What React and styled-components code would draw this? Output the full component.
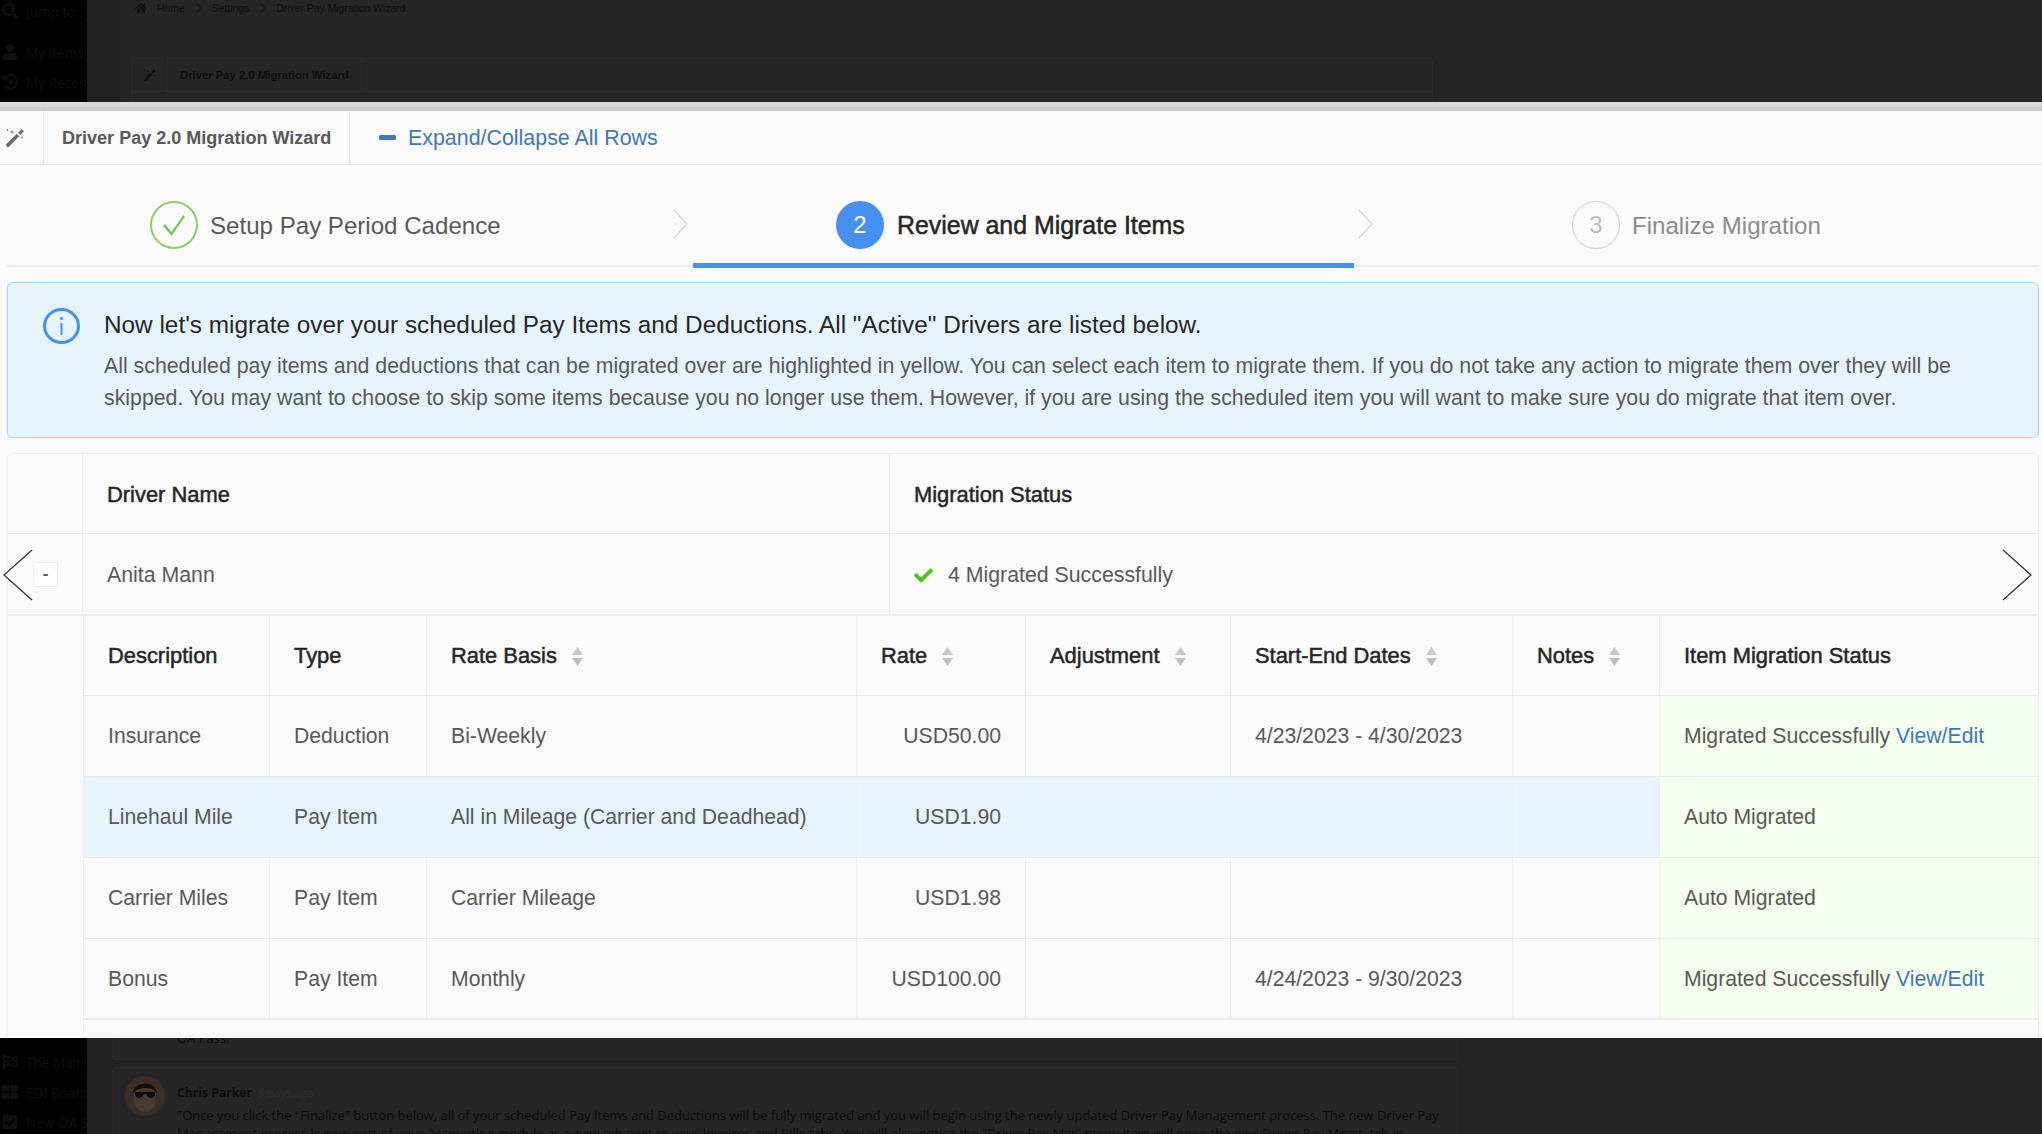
import React from 'react';
import styled, { createGlobalStyle } from 'styled-components';
import { FaCheck, FaHome, FaUser, FaHistory, FaFlagCheckered, FaThLarge, FaSearch, FaCheckSquare } from 'react-icons/fa';

const GlobalStyle = createGlobalStyle`
  * { box-sizing: border-box; }
  html, body { margin: 0; padding: 0; background: #252525; }
  body { font-family: "Liberation Sans", Arial, sans-serif; }
`;

const Page = styled.div`
  position: relative;
  width: 2042px;
  height: 1134px;
  overflow: hidden;
  display: flex;
  flex-direction: column;
`;

/* dimmed app behind the lightbox */
const DarkBand = styled.div`
  height: ${p => p.$height}px;
  flex: none;
  display: flex;
  overflow: hidden;
  background: #252525;
`;

const DarkSidebar = styled.div`
  width: 87px;
  flex: none;
  overflow: hidden;
  background: #000;
  padding: ${p => p.$top}px 0 0 2px;
  display: flex;
  flex-direction: column;
  gap: ${p => p.$gap}px;
  font-family: "Open Sans", sans-serif;
`;

const DarkNavItem = styled.div`
  display: flex;
  align-items: center;
  gap: 8px;
  height: 24px;
  flex: none;
  margin-top: ${p => p.$offset || 0}px;
  white-space: nowrap;
  color: #101010;
  font-size: 13.6px;
  svg { flex: none; width: 16px; height: 16px; color: #101010; }
`;

const DarkMain = styled.div`
  flex: 1;
  min-width: 0;
  background: linear-gradient(90deg, #222 33px, #252525 33px);
`;

const DarkCrumbs = styled.div`
  display: flex;
  align-items: center;
  height: 16px;
  padding-left: 48px;
  gap: 10px;
  color: #111;
  font-size: 10.4px;
  svg { color: #111; flex: none; }
`;

const DarkPanel = styled.div`
  width: ${p => p.$width || 1346}px;
  height: ${p => p.$height}px;
  margin: ${p => p.$margin};
  padding-left: ${p => p.$inset || 0}px;
  background: #262626;
  border: 1px solid #2b2b2b;
  border-radius: 3px;
`;

const DarkPanelHead = styled.div`
  display: flex;
  align-items: center;
  height: 33px;
  border-bottom: 1px solid #2b2b2b;
  color: #0f0f0f;
  font-size: 11.3px;
  font-weight: 700;
`;

const DarkPanelIcon = styled.div`
  width: 36px;
  height: 100%;
  display: flex;
  align-items: center;
  justify-content: center;
  border-right: 1px solid #2b2b2b;
  color: #111;
`;

const DarkPanelTitle = styled.div`
  height: 100%;
  display: flex;
  align-items: center;
  padding: 0 12px;
  border-right: 1px solid #2b2b2b;
`;

const DarkComment = styled.div`
  display: flex;
  gap: 12px;
  padding: 8px 12px;
  font-family: "Open Sans", sans-serif;
`;

const DarkAuthor = styled.div`
  font-size: 12.2px;
  line-height: 16px;
  color: #0d0d0d;
  font-weight: 700;
  margin-top: 9px;
  small { font-size: 11.5px; font-weight: 400; color: #2f2f2f; margin-left: 2px; }
`;

const DarkText = styled.div`
  font-size: 12.95px;
  line-height: 18px;
  color: #0d0d0d;
  white-space: nowrap;
  font-family: "Open Sans", sans-serif;
  margin-top: ${p => p.$top || 0}px;
`;

/* the lightbox screenshot itself */
const Shot = styled.div`
  position: relative;
  flex: 1;
  min-height: 0;
  overflow: hidden;
  background: #fafafa;
  color: #595959;
  font-size: 21.3px;
`;

const TopEdge = styled.div`
  height: 9px;
  background: linear-gradient(#dcdcdc, #c8c8c8);
`;

const Toolbar = styled.div`
  display: flex;
  align-items: stretch;
  height: 54px;
  border-bottom: 1px solid #e8e8e8;
`;

const ToolIcon = styled.div`
  width: 44px;
  display: flex;
  align-items: center;
  padding-left: 5px;
  border-right: 1px solid #e8e8e8;
`;

const ToolTitle = styled.div`
  width: 306px;
  display: flex;
  align-items: center;
  padding: 2px 0 0 18px;
  border-right: 1px solid #e8e8e8;
  color: #595959;
  font-size: 18.05px;
  font-weight: 700;
  white-space: nowrap;
`;

const ExpandLink = styled.a`
  display: flex;
  align-items: center;
  margin-left: 29px;
  padding-top: 2px;
  gap: 12px;
  color: #4078b8;
  font-size: 21.4px;
  white-space: nowrap;
`;

const MinusBar = styled.span`
  width: 17px;
  height: 5px;
  margin-top: -2px;
  border-radius: 1.5px;
  background: #4078b8;
`;

const Steps = styled.div`
  display: grid;
  grid-template-columns: 686px 661px 685px;
  height: 103px;
  margin: 0 3px 0 7px;
`;

const Step = styled.div`
  display: flex;
  align-items: flex-start;
  gap: 12px;
  padding-top: 36px;
  padding-left: ${p => p.$indent}px;
  height: ${p => (p.$active ? 103 : 102)}px;
  border-bottom: ${p => (p.$active ? '5px solid #4690f5' : '2px solid #ececec')};
`;

const StepCircle = styled.div`
  width: 48px;
  height: 48px;
  flex: none;
  border-radius: 50%;
  display: flex;
  align-items: center;
  justify-content: center;
  font-size: 24px;
  border: ${p => {
    if (p.$state === 'done') return '2px solid #8ccf63';
    if (p.$state === 'todo') return '1.5px solid #cfcfcf';
    return 'none';
  }};
  background: ${p => (p.$state === 'active' ? '#4690f5' : 'transparent')};
  color: ${p => (p.$state === 'active' ? '#fff' : '#bdbdbd')};
`;

const StepLabel = styled.div`
  height: 48px;
  line-height: 49px;
  margin-left: ${p => (p.$state === 'active' ? 1 : 0)}px;
  font-size: ${p => (p.$state === 'active' ? 24.9 : 24.1)}px;
  white-space: nowrap;
  color: ${p => (p.$state === 'active' ? '#262626' : p.$state === 'todo' ? '#8c8c8c' : '#595959')};
  -webkit-text-stroke: ${p => (p.$state === 'active' ? '0.5px #262626' : '0')};
`;

const StepChevron = styled.svg`
  flex: none;
  width: 16px;
  height: 30px;
  margin-left: auto;
  margin-top: 8px;
  margin-right: ${p => p.$right}px;
`;

const Info = styled.div`
  display: flex;
  gap: 24px;
  margin: 14px 3px 0 7px;
  height: 156px;
  padding: 25px 20px 0 35px;
  background: #e6f4fe;
  border: 1px solid #a6d7fb;
  border-radius: 6px;
`;

const InfoIcon = styled.svg`
  width: 37px;
  height: 36px;
  flex: none;
`;

const InfoTitle = styled.div`
  color: #262626;
  font-size: 24.35px;
  line-height: 34px;
  white-space: nowrap;
`;

const InfoBody = styled.div`
  margin-top: 8px;
  color: #595959;
  font-size: 21.32px;
  line-height: 32px;
  white-space: nowrap;
`;

const Drivers = styled.div`
  margin: 15px 3px 0 7px;
  height: 700px;
  background: #fafafa;
  border: 1px solid #efefef;
  border-radius: 6px 6px 0 0;
`;

const DriverRow = styled.div`
  display: grid;
  grid-template-columns: 75px 807px 1fr;
  height: ${p => p.$height}px;
  border-bottom: ${p => p.$rule || 1}px solid #ebebeb;
`;

const DriverCell = styled.div`
  display: flex;
  align-items: center;
  gap: 15px;
  padding: 2px 0 0 24px;
  border-right: ${p => (p.$last ? 'none' : '1px solid #efefef')};
  color: ${p => (p.$head ? '#262626' : '#595959')};
  font-size: ${p => (p.$head ? 21.9 : 21.3)}px;
  -webkit-text-stroke: ${p => (p.$head ? '0.5px #262626' : '0')};
`;

const ToggleCell = styled(DriverCell)`
  padding: 0 0 0 25px;
`;

const ToggleButton = styled.div`
  width: 25px;
  height: 25px;
  display: flex;
  align-items: center;
  justify-content: center;
  background: #fff;
  border: 1px solid #ededed;
  border-radius: 3px;
  color: #595959;
  font-size: 17px;
  font-weight: 700;
`;

const ExpandedRow = styled.div`
  display: grid;
  grid-template-columns: 76px 1fr;
`;

const Spacer = styled.div`
  border-right: 1px solid #efefef;
  height: 440px;
`;

const ItemRow = styled.div`
  display: grid;
  grid-template-columns: 186px 157px 430px 169px 205px 282px 147px 1fr;
  height: ${p => p.$height || 81}px;
  border-bottom: ${p => (p.$strong ? 2 : 1)}px solid #ececec;
  background: ${p => (p.$selected ? '#e6f4fe' : 'transparent')};
  font-size: 21.2px;
`;

const ItemCell = styled.div`
  display: flex;
  align-items: center;
  justify-content: ${p => (p.$right ? 'flex-end' : 'flex-start')};
  gap: 15px;
  padding: ${p => (p.$head ? '1px' : '0')} 24px 0;
  white-space: nowrap;
  border-right: ${p => (p.$last ? 'none' : '1px solid #efefef')};
  background: ${p => (p.$status ? '#f6ffed' : 'transparent')};
  color: ${p => (p.$head ? '#262626' : '#595959')};
`;

const HeadText = styled.span`
  font-size: 21.9px;
  -webkit-text-stroke: 0.5px #262626;
`;

const EditLink = styled.a`
  color: #4078b8;
  margin-left: 6px;
`;

const Arrow = styled.svg`
  position: absolute;
  top: 445px;
  ${p => (p.$side === 'left' ? 'left: 1px;' : 'right: 8px;')}
  width: 34px;
  height: 56px;
`;

const AvatarArt = styled.svg`
  flex: none;
  width: 40px;
  height: 40px;
`;

const columns = [
  { label: 'Description' },
  { label: 'Type' },
  { label: 'Rate Basis', sort: true },
  { label: 'Rate', sort: true },
  { label: 'Adjustment', sort: true },
  { label: 'Start-End Dates', sort: true },
  { label: 'Notes', sort: true },
  { label: 'Item Migration Status' },
];

const items = [
  { name: 'Insurance', type: 'Deduction', basis: 'Bi-Weekly', rate: 'USD50.00', dates: '4/23/2023 - 4/30/2023', status: 'Migrated Successfully', edit: true },
  { name: 'Linehaul Mile', type: 'Pay Item', basis: 'All in Mileage (Carrier and Deadhead)', rate: 'USD1.90', dates: '', status: 'Auto Migrated', selected: true },
  { name: 'Carrier Miles', type: 'Pay Item', basis: 'Carrier Mileage', rate: 'USD1.98', dates: '', status: 'Auto Migrated' },
  { name: 'Bonus', type: 'Pay Item', basis: 'Monthly', rate: 'USD100.00', dates: '4/24/2023 - 9/30/2023', status: 'Migrated Successfully', edit: true },
];

function SortIcon() {
  return (
    <svg width="11" height="19" viewBox="0 0 11 19">
      <path d="M5.5 0 L11 8 H0 Z" fill="#c9c9c9" />
      <path d="M0 11 H11 L5.5 19 Z" fill="#bfbfbf" />
    </svg>
  );
}

function WandIcon({ size, color, spark }) {
  return (
    <svg width={size} height={size} viewBox="0 0 20 20">
      <line x1="1.8" y1="18.2" x2="13" y2="7" stroke={color} strokeWidth="3.6" />
      <line x1="14.2" y1="5.8" x2="17.8" y2="2.2" stroke={color} strokeWidth="3.2" />
      <path d="M7 2 V6 M5 4 H9 M2.5 1 V3 M1.5 2 H3.5 M17 8.5 V10.5 M16 9.5 H18" stroke={spark} strokeWidth="1" fill="none" />
    </svg>
  );
}

function CrumbSep() {
  return (
    <svg width="7" height="12" viewBox="0 0 7 12">
      <polyline points="1,1 6,6 1,11" fill="none" stroke="#161616" strokeWidth="1" />
    </svg>
  );
}

function Chevron({ right }) {
  return (
    <StepChevron $right={right} viewBox="0 0 16 30">
      <polyline points="1,1 14,15 1,29" fill="none" stroke="#d4d4d4" strokeWidth="1.2" />
    </StepChevron>
  );
}

function NavArrow({ side }) {
  const pts = side === 'left' ? '31,3 3,28 31,53' : '3,3 31,28 3,53';
  return (
    <Arrow $side={side} viewBox="0 0 34 56">
      <polyline points={pts} fill="none" stroke="#fff" strokeWidth="4" />
      <polyline points={pts} fill="none" stroke="#333" strokeWidth="1.3" />
    </Arrow>
  );
}

function Avatar() {
  return (
    <AvatarArt viewBox="0 0 40 40">
      <circle cx="20" cy="20" r="20" fill="#3a2f28" />
      <ellipse cx="20" cy="22" rx="11" ry="14" fill="#4a3b32" />
      <path d="M8 18 C8 4 32 4 32 18 C28 10 12 10 8 18 Z" fill="#120e0c" />
      <path d="M10 16 H30 V19 C29 23 23 23 21 18 H19 C17 23 11 23 10 19 Z" fill="#0d0b0a" />
    </AvatarArt>
  );
}

export default function App() {
  return (
    <Page>
      <GlobalStyle />

      <DarkBand $height={102}>
        <DarkSidebar $top={0} $gap={0}>
          <DarkNavItem $offset={-1}><FaSearch />Jump to...</DarkNavItem>
          <DarkNavItem $offset={17}><FaUser />My Items</DarkNavItem>
          <DarkNavItem $offset={6}><FaHistory />My Recent</DarkNavItem>
        </DarkSidebar>
        <DarkMain>
          <DarkCrumbs>
            <FaHome size={12} />
            <span>Home</span>
            <CrumbSep />
            <span>Settings</span>
            <CrumbSep />
            <span>Driver Pay Migration Wizard</span>
          </DarkCrumbs>
          <DarkPanel $margin="42px 0 0 44px" $width={1302} $height={60}>
            <DarkPanelHead>
              <DarkPanelIcon><WandIcon size={13} color="#111" spark="#111" /></DarkPanelIcon>
              <DarkPanelTitle>Driver Pay 2.0 Migration Wizard</DarkPanelTitle>
            </DarkPanelHead>
          </DarkPanel>
        </DarkMain>
      </DarkBand>

      <Shot>
        <TopEdge />
        <Toolbar>
          <ToolIcon><WandIcon size={20} color="#6b6b6b" spark="#8a8a8a" /></ToolIcon>
          <ToolTitle>Driver Pay 2.0 Migration Wizard</ToolTitle>
          <ExpandLink><MinusBar />Expand/Collapse All Rows</ExpandLink>
        </Toolbar>

        <Steps>
          <Step $indent={143}>
            <StepCircle $state="done">
              <svg width="24" height="24" viewBox="0 0 24 24">
                <polyline points="2,12 9.5,21 22,3" fill="none" stroke="#6cc040" strokeWidth="2" />
              </svg>
            </StepCircle>
            <StepLabel $state="done">Setup Pay Period Cadence</StepLabel>
            <Chevron right={4} />
          </Step>
          <Step $indent={143} $active>
            <StepCircle $state="active">2</StepCircle>
            <StepLabel $state="active">Review and Migrate Items</StepLabel>
            <Chevron right={-20} />
          </Step>
          <Step $indent={218}>
            <StepCircle $state="todo">3</StepCircle>
            <StepLabel $state="todo">Finalize Migration</StepLabel>
          </Step>
        </Steps>

        <Info>
          <InfoIcon viewBox="0 0 37 36">
            <ellipse cx="18.5" cy="18" rx="17" ry="16.5" fill="none" stroke="#4690f5" strokeWidth="3" />
            <circle cx="18.5" cy="10.5" r="1.6" fill="#4690f5" />
            <rect x="17.5" y="15" width="2" height="12" fill="#4690f5" />
          </InfoIcon>
          <div>
            <InfoTitle>Now let's migrate over your scheduled Pay Items and Deductions. All "Active" Drivers are listed below.</InfoTitle>
            <InfoBody>
              All scheduled pay items and deductions that can be migrated over are highlighted in yellow. You can select each item to migrate them. If you do not take any action to migrate them over they will be
              <br />
              skipped. You may want to choose to skip some items because you no longer use them. However, if you are using the scheduled item you will want to make sure you do migrate that item over.
            </InfoBody>
          </div>
        </Info>

        <Drivers>
          <DriverRow $height={80}>
            <DriverCell />
            <DriverCell $head>Driver Name</DriverCell>
            <DriverCell $head $last>Migration Status</DriverCell>
          </DriverRow>
          <DriverRow $height={82} $rule={2}>
            <ToggleCell><ToggleButton>-</ToggleButton></ToggleCell>
            <DriverCell>Anita Mann</DriverCell>
            <DriverCell $last>
              <FaCheck size={19} color="#52c41a" />
              4 Migrated Successfully
            </DriverCell>
          </DriverRow>
          <ExpandedRow>
            <Spacer />
            <div>
              <ItemRow $height={80}>
                {columns.map((col, i) => (
                  <ItemCell key={col.label} $head $last={i === columns.length - 1}>
                    <HeadText>{col.label}</HeadText>
                    {col.sort && <SortIcon />}
                  </ItemCell>
                ))}
              </ItemRow>
              {items.map(item => (
                <ItemRow key={item.name} $selected={item.selected} $strong={item.name === 'Bonus'}>
                  <ItemCell>{item.name}</ItemCell>
                  <ItemCell>{item.type}</ItemCell>
                  <ItemCell>{item.basis}</ItemCell>
                  <ItemCell $right>{item.rate}</ItemCell>
                  <ItemCell />
                  <ItemCell>{item.dates}</ItemCell>
                  <ItemCell />
                  <ItemCell $status $last>
                    <span>
                      {item.status}
                      {item.edit && <EditLink>View/Edit</EditLink>}
                    </span>
                  </ItemCell>
                </ItemRow>
              ))}
            </div>
          </ExpandedRow>
        </Drivers>

        <NavArrow side="left" />
        <NavArrow side="right" />
      </Shot>

      <DarkBand $height={96}>
        <DarkSidebar $top={12} $gap={6}>
          <DarkNavItem><FaFlagCheckered />The Main</DarkNavItem>
          <DarkNavItem><FaThLarge />EDI Board</DarkNavItem>
          <DarkNavItem><FaCheckSquare />New QA S</DarkNavItem>
        </DarkSidebar>
        <DarkMain>
          <DarkPanel $margin="-20px 0 0 25px" $height={42} $inset={64}>
            <DarkText $top={10}>QA Pass.</DarkText>
          </DarkPanel>
          <DarkPanel $margin="7px 0 0 25px" $height={100}>
            <DarkComment>
              <Avatar />
              <div>
                <DarkAuthor>Chris Parker <small>8 days ago</small></DarkAuthor>
                <DarkText $top={5}>"Once you click the "Finalize" button below, all of your scheduled Pay Items and Deductions will be fully migrated and you will begin using the newly updated Driver Pay Management process. The new Driver Pay</DarkText>
                <DarkText>Management process is now part of your Accounting module as a new tab next to your Invoices and Bills tabs. You will also notice the "Driver Pay Mgt" menu item will open the new Driver Pay Mgmt. tab in</DarkText>
              </div>
            </DarkComment>
          </DarkPanel>
        </DarkMain>
      </DarkBand>
    </Page>
  );
}
